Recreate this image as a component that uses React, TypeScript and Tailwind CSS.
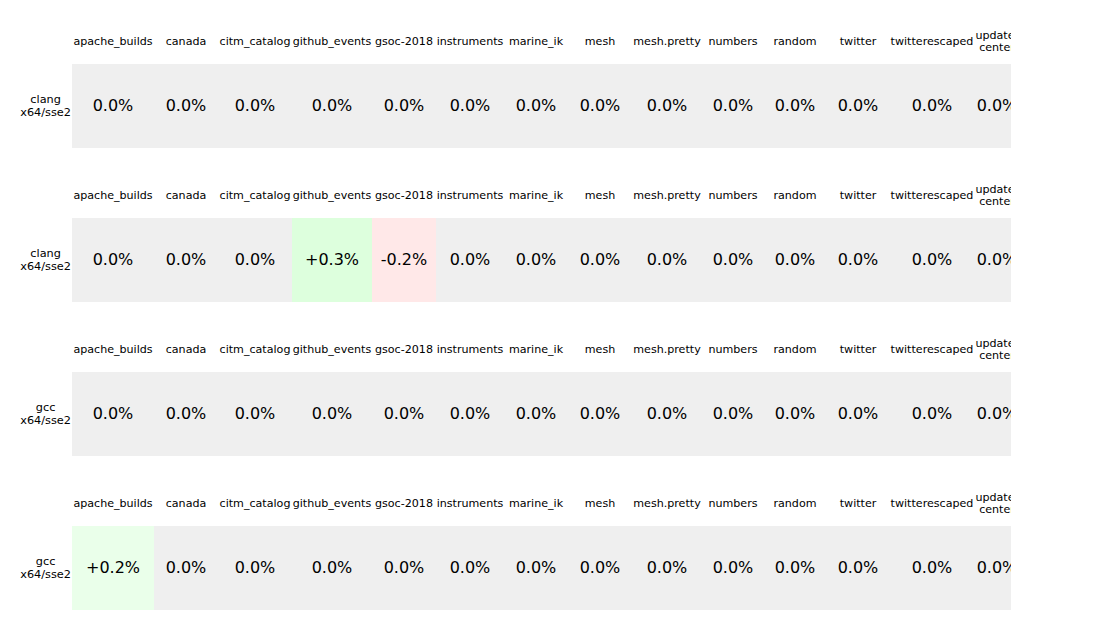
import React from "react";

type Cell = { value: string; tone?: "up" | "upLight" | "down" };

const COLUMNS: { name: string; width: string }[] = [
  { name: "apache_builds", width: "w-[82px]" },
  { name: "canada", width: "w-[64px]" },
  { name: "citm_catalog", width: "w-[74px]" },
  { name: "github_events", width: "w-[80px]" },
  { name: "gsoc-2018", width: "w-[64px]" },
  { name: "instruments", width: "w-[68px]" },
  { name: "marine_ik", width: "w-[64px]" },
  { name: "mesh", width: "w-[64px]" },
  { name: "mesh.pretty", width: "w-[70px]" },
  { name: "numbers", width: "w-[62px]" },
  { name: "random", width: "w-[62px]" },
  { name: "twitter", width: "w-[64px]" },
  { name: "twitterescaped", width: "w-[84px]" },
  { name: "update-center", width: "w-[46px]" },
];

const zeros = (): Cell[] => COLUMNS.map(() => ({ value: "0.0%" }));

function withChanges(changes: Record<number, Cell>): Cell[] {
  return zeros().map((c, i) => changes[i] ?? c);
}

const BLOCKS: { compiler: string; cells: Cell[] }[] = [
  { compiler: "clang", cells: zeros() },
  {
    compiler: "clang",
    cells: withChanges({
      3: { value: "+0.3%", tone: "up" },
      4: { value: "-0.2%", tone: "down" },
    }),
  },
  { compiler: "gcc", cells: zeros() },
  { compiler: "gcc", cells: withChanges({ 0: { value: "+0.2%", tone: "upLight" } }) },
];

const toneClass: Record<string, string> = {
  up: "bg-[#ddffdd]",
  upLight: "bg-[#eaffea]",
  down: "bg-[#ffe8e8]",
};

function HeaderRow() {
  return (
    <div className="ml-[72px] flex h-[46px] w-[939px] overflow-hidden pt-[2px] text-[11.1px] leading-[12px]">
      {COLUMNS.map((col, i) =>
        i === COLUMNS.length - 1 ? (
          <div key={col.name} className={`${col.width} flex shrink-0 items-center text-center`}>
            {col.name}
          </div>
        ) : (
          <div
            key={col.name}
            className={`${col.width} flex shrink-0 items-center justify-center whitespace-nowrap`}
          >
            {col.name}
          </div>
        ),
      )}
    </div>
  );
}

function DataRow({ compiler, cells }: { compiler: string; cells: Cell[] }) {
  return (
    <div className="flex h-[84px]">
      <div className="flex w-[72px] shrink-0 items-center justify-end pr-[1px]">
        <div className="text-center text-[11.3px] leading-[13px]">
          {compiler}
          <br />
          x64/sse2
        </div>
      </div>
      <div className="flex w-[939px] shrink-0 overflow-hidden bg-[#efefef] text-[16px]">
        {cells.map((cell, i) => (
          <div
            key={COLUMNS[i].name}
            className={`${COLUMNS[i].width} flex shrink-0 items-center justify-center whitespace-nowrap ${
              cell.tone ? toneClass[cell.tone] : ""
            }`}
          >
            {cell.value}
          </div>
        ))}
      </div>
    </div>
  );
}

export default function App() {
  return (
    <div
      className="flex h-[640px] w-[1100px] flex-col gap-[24px] bg-white pt-[18px] text-black"
      style={{ fontFamily: '"DejaVu Sans", sans-serif' }}
    >
      {BLOCKS.map((block, i) => (
        <div key={i} className="flex flex-col">
          <HeaderRow />
          <DataRow compiler={block.compiler} cells={block.cells} />
        </div>
      ))}
    </div>
  );
}
